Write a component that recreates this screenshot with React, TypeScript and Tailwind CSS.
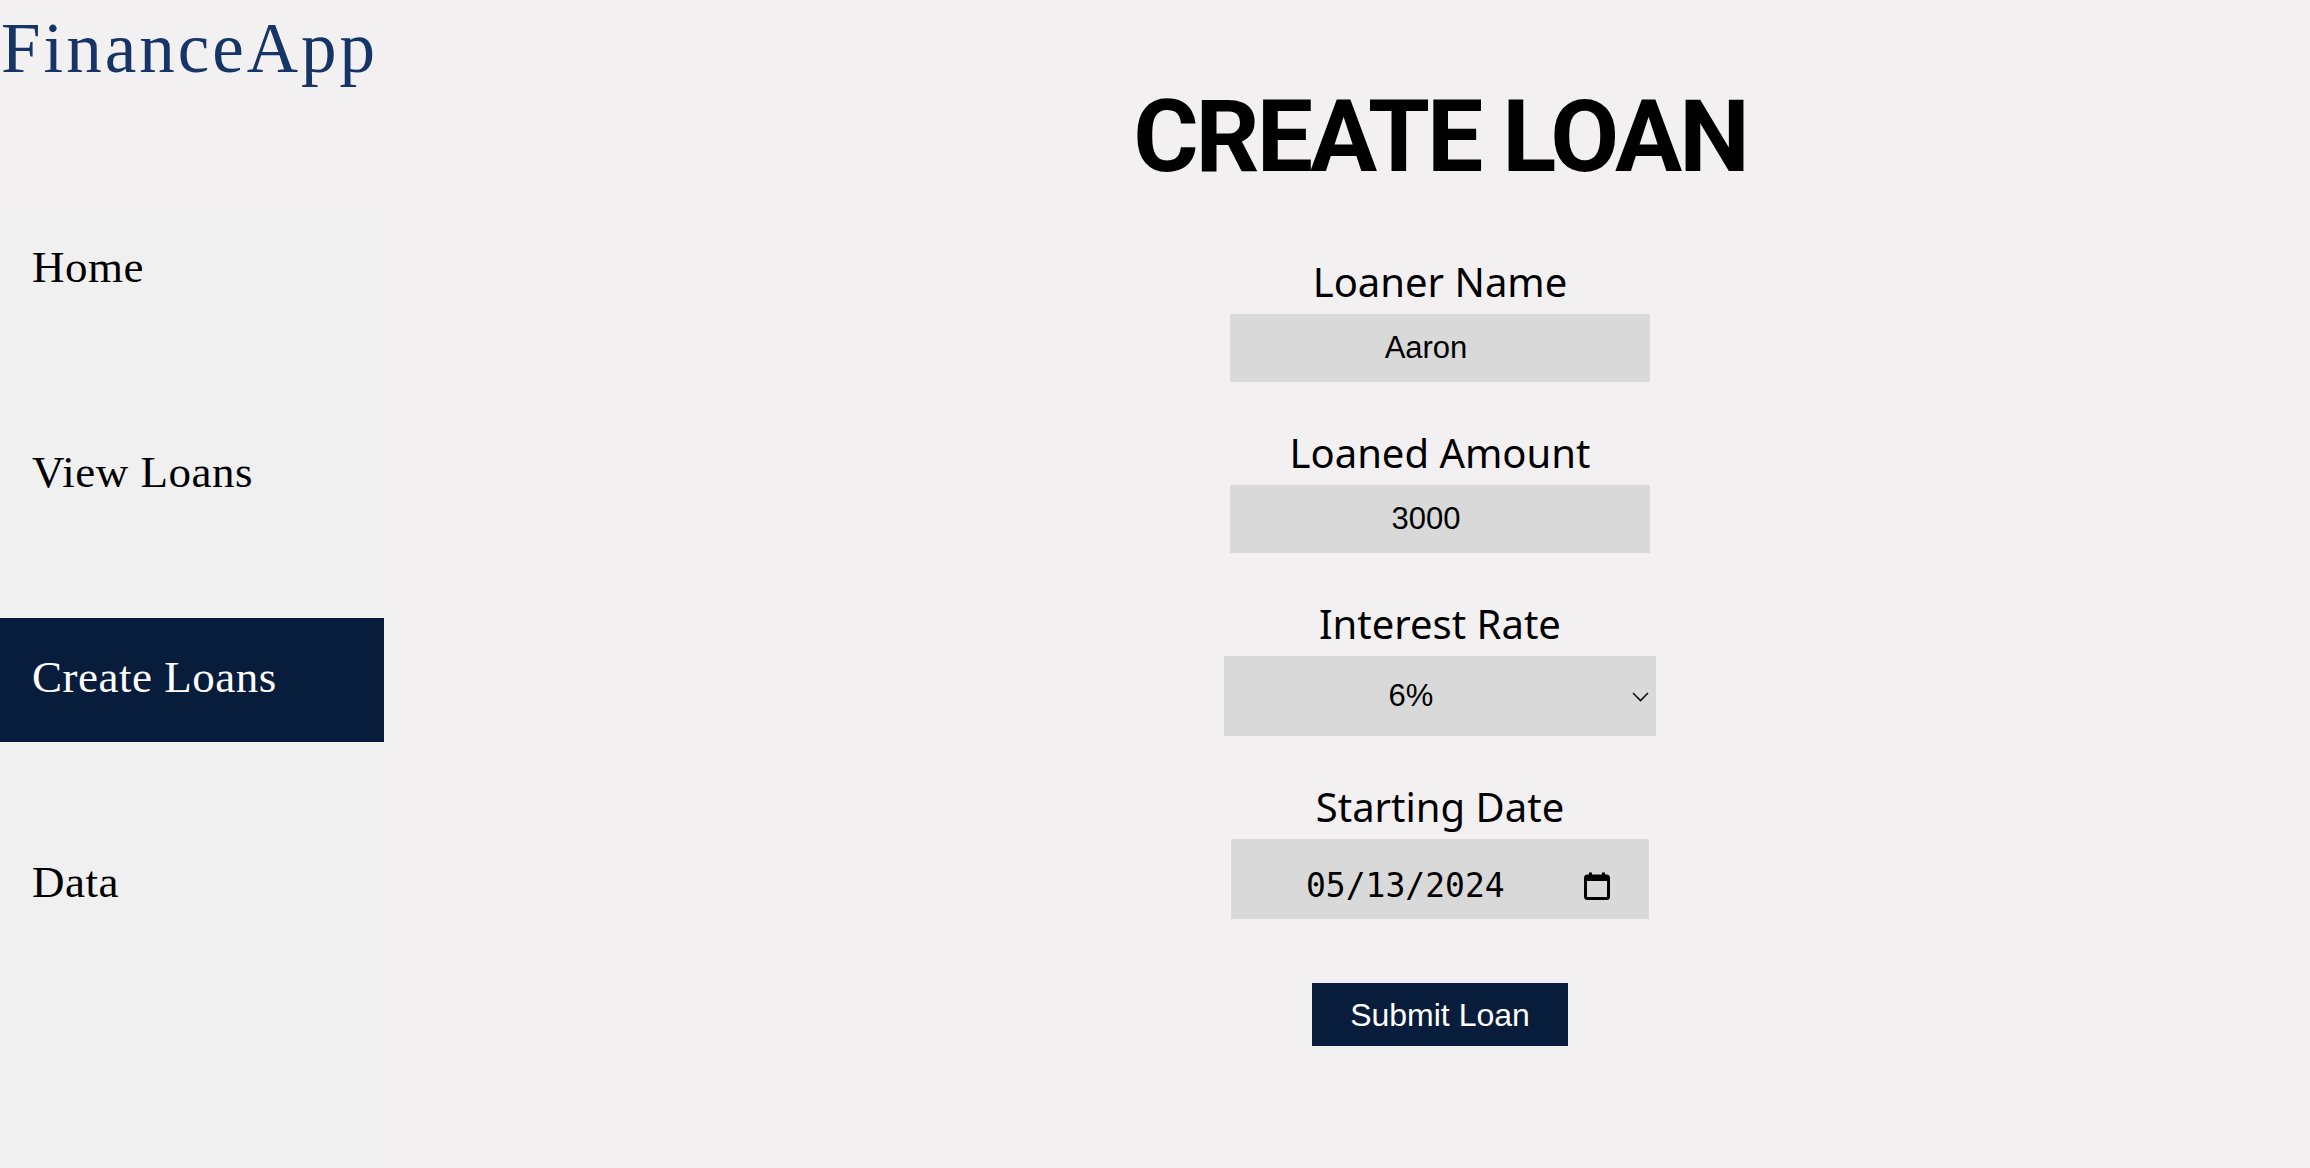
import React from "react";

const navItems = ["Home", "View Loans", "Create Loans", "Data"];

function Chevron() {
  return (
    <svg width="17" height="10" viewBox="0 0 17 10" fill="none">
      <polyline points="1,1 8.5,8.5 16,1" stroke="#111" strokeWidth="1.6" />
    </svg>
  );
}

function CalendarIcon() {
  return (
    <svg width="26" height="28" viewBox="0 0 26 28" fill="none">
      <rect x="5" y="0.5" width="3" height="5" fill="#000" />
      <rect x="18" y="0.5" width="3" height="5" fill="#000" />
      <rect x="1.5" y="4" width="23" height="22.5" rx="2" stroke="#000" strokeWidth="3" />
      <rect x="1.5" y="4" width="23" height="5" fill="#000" />
    </svg>
  );
}

export default function App() {
  return (
    <div className="flex h-[1168px] w-full overflow-hidden bg-[#f2f0f1]">
      <aside className="flex w-[384px] shrink-0 flex-col">
        <div className="h-[208px] pl-[1px] pt-[13px]">
          <div className="font-['Liberation_Serif',serif] text-[71px] leading-[71px] tracking-[3px] text-[#163566]">
            FinanceApp
          </div>
        </div>
        <nav className="flex flex-1 flex-col gap-[81px] bg-[#f0f0f0]">
          {navItems.map((item) => {
            const active = item === "Create Loans";
            return (
              <div
                key={item}
                className={
                  active
                    ? "flex h-[124px] items-center bg-[#081c3b] pb-[6px] pl-[32px] font-['Liberation_Serif',serif] text-[45px] leading-[45px] tracking-[0.5px] text-white"
                    : "flex h-[124px] items-center pb-[6px] pl-[32px] font-['Liberation_Serif',serif] text-[45px] leading-[45px] tracking-[0.5px] text-black"
                }
              >
                {item}
              </div>
            );
          })}
        </nav>
      </aside>
      <main className="flex flex-1 flex-col items-center pl-[186px] pt-[87px]">
        <h1 className="font-['Roboto',sans-serif] text-[100px] font-bold leading-[100px] tracking-[-3px] text-black">
          CREATE LOAN
        </h1>
        <form className="mt-[75px] flex flex-col items-center gap-[51px]">
          <div className="flex flex-col items-center gap-[12px]">
            <label className="font-['Noto_Sans',sans-serif] text-[40px] leading-[40px] text-black">
              Loaner Name
            </label>
            <input
              readOnly
              value="Aaron"
              className="h-[68px] w-[420px] bg-[#d9d9d9] pr-[28px] text-center font-['Liberation_Sans',sans-serif] text-[31px] text-black outline-none"
            />
          </div>
          <div className="flex flex-col items-center gap-[12px]">
            <label className="font-['Noto_Sans',sans-serif] text-[40px] leading-[40px] text-black">
              Loaned Amount
            </label>
            <input
              readOnly
              value="3000"
              className="h-[68px] w-[420px] bg-[#d9d9d9] pr-[28px] text-center font-['Liberation_Sans',sans-serif] text-[31px] text-black outline-none"
            />
          </div>
          <div className="flex flex-col items-center gap-[12px]">
            <label className="font-['Noto_Sans',sans-serif] text-[40px] leading-[40px] text-black">
              Interest Rate
            </label>
            <div className="relative flex h-[80px] w-[432px] items-center justify-center bg-[#d9d9d9] pr-[58px] font-['Liberation_Sans',sans-serif] text-[31px] text-black">
              6%
              <span className="absolute right-[7px] top-[36px] flex">
                <Chevron />
              </span>
            </div>
          </div>
          <div className="flex flex-col items-center gap-[12px]">
            <label className="font-['Noto_Sans',sans-serif] text-[40px] leading-[40px] text-black">
              Starting Date
            </label>
            <div className="flex h-[80px] w-[418px] items-center bg-[#d9d9d9] pl-[75px] pr-[39px] pt-[14px] font-['DejaVu_Sans_Mono',monospace] text-[33px] leading-[40px] text-black">
              <span>05/13/2024</span>
              <span className="ml-auto flex">
                <CalendarIcon />
              </span>
            </div>
          </div>
          <button
            type="button"
            className="mt-[13px] h-[63px] w-[256px] bg-[#081c3b] font-['Liberation_Sans',sans-serif] text-[32px] text-white"
          >
            Submit Loan
          </button>
        </form>
      </main>
    </div>
  );
}
